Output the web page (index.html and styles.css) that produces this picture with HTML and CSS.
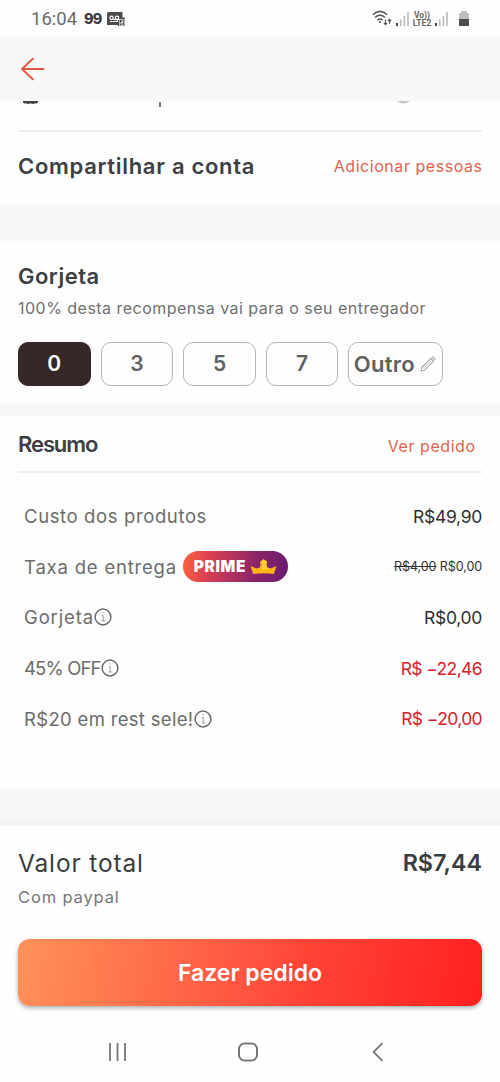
FILE: index.html
```html
<!DOCTYPE html>
<html lang="pt-BR">
<head>
<meta charset="utf-8">
<title>Resumo do pedido</title>
<link rel="stylesheet" href="styles.css">
</head>
<body>
<div class="screen">
  <div class="status">
    <div class="status-left">
      <span class="clock">16:04</span>
      <span class="app99">99</span>
      <svg class="voicemail" width="18" height="14" viewBox="0 0 18 14"><path d="M1.500 0H15.500V5.500H18V14H11V13H0V1.500Q0 0 1.500 0Z" fill="#4d4d4d"/><g fill="none" stroke="#fff" stroke-width="1.100"><circle cx="4.500" cy="5.800" r="1.700"/><circle cx="10" cy="5.800" r="1.700"/><path d="M4.500 7.500H10M3 9.500H10.500V7.500H12.500"/></g><rect x="12.500" y="7.500" width="5" height="6" fill="#4d4d4d" stroke="#fff" stroke-width=".6"/><path d="M14 9h2v1.500h-2V12h2" fill="none" stroke="#fff" stroke-width=".8"/></svg>
    </div>
    <div class="status-right">
      <svg class="wifi" width="20" height="17" viewBox="0 0 20 17" fill="none" stroke="#555"><path d="M.8 4.800Q8 -2 15.200 4.800M3 7.500Q8 3 13 7.500M5.300 10.200Q8 7.800 10.700 10.200" stroke-width="1.500"/><circle cx="8" cy="12" r="1.100" fill="#555" stroke="none"/><path d="M13.500 9.500V14.500M11.800 12.800L13.500 14.600L15.200 12.800M17.500 14V9.500M15.900 11.200L17.500 9.400L19.100 11.200" stroke-width="1.100"/></svg>
      <svg class="signal" width="14" height="15" viewBox="0 0 14 15"><path d="M0 12h2v3H0z" fill="#444"/><path d="M4 8.500h1.600V15H4zM7.600 5h1.600v10H7.600zM11.200 1h1.600v14h-1.600z" fill="#bbb"/></svg>
      <span class="volte"><span>Vo))</span><span>LTE2</span></span>
      <svg class="signal" width="14" height="15" viewBox="0 0 14 15"><path d="M0 12h2v3H0z" fill="#444"/><path d="M4 8.500h1.600V15H4zM7.600 5h1.600v10H7.600zM11.200 1h1.600v14h-1.600z" fill="#bbb"/></svg>
      <svg class="battery" width="10" height="15" viewBox="0 0 10 15"><path d="M0 15V3.500Q0 2 1.500 2H2.500V0H7.500V2H8.500Q10 2 10 3.500V15Z" fill="#bdbdbd"/><path d="M0 8H10V14Q10 15 9 15H1Q0 15 0 14Z" fill="#4d4d4d"/></svg>
    </div>
  </div>

  <div class="header">
    <svg width="24" height="24" viewBox="0 0 24 24" fill="none" stroke="#e3583f" stroke-width="1.900" stroke-linecap="round" stroke-linejoin="round"><path d="M22.500 12H1M11.800 1.700L1 12L11.800 22.300"/></svg>
  </div>

  <div class="share">
    <svg class="scrolled" width="464" height="8" viewBox="0 0 464 8"><path d="M5 0H20V1.500Q18.500 3.200 17 2.200Q15 3.500 12.500 2.300Q10 3.500 8 2.200Q6.500 3 5 1.500Z" fill="#424242"/><path d="M141 1h2v5h-2z" fill="#777"/><path d="M379 0H392Q389 2.600 385.500 2.600Q382 2.600 379 0Z" fill="#c8c8c8"/></svg>
    <div class="rule share-rule"></div>
    <div class="share-row">
      <span class="title t-share">Compartilhar a conta</span>
      <span class="link l-add">Adicionar pessoas</span>
    </div>
  </div>
  <div class="band"></div>

  <div class="tip">
    <div class="title t-tip">Gorjeta</div>
    <div class="tip-note">100% desta recompensa vai para o seu entregador</div>
    <div class="chips">
      <div class="chip chip-on">0</div>
      <div class="chip">3</div>
      <div class="chip">5</div>
      <div class="chip">7</div>
      <div class="chip chip-other"><span>Outro</span><svg width="16" height="16" viewBox="0 0 16 16" fill="none" stroke="#aaa" stroke-width="1.100" stroke-linejoin="round"><path d="M1 15L1.800 11.500L10.800 2.500L13.500 5.200L4.500 14.200Z"/><path d="M11.800 1.500L13 .5L15.500 3L14.500 4.200Z" fill="#ddd" stroke="#ccc"/><path d="M3.500 12.500L11 5" stroke="#ddd"/></svg></div>
    </div>
  </div>
  <div class="band band-thin"></div>

  <div class="summary">
    <div class="summary-head">
      <span class="title t-sum">Resumo</span>
      <span class="link l-see">Ver pedido</span>
    </div>
    <div class="rule"></div>
    <div class="rows">
      <div class="row"><span class="label w1">Custo dos produtos</span><span class="val v1">R$49,90</span></div>
      <div class="row"><span class="label w2">Taxa de entrega</span>
        <span class="prime"><span class="prime-text">PRIME</span><svg width="27" height="16" viewBox="0 0 27 16"><path d="M.5 7L6.500 9.500L9.800 8.500L10.800 5Q9 3.500 10.800 2L13.500 .3L16.200 2Q18 3.500 16.200 5L17.200 8.500L20.500 9.500L26.500 7L23.800 15Q13.500 13.400 3.200 15Z" fill="#fbb316"/><path d="M12 1.500L13.500 .3L16.200 2Q18 3.500 16.200 5L17.200 8.500L20.500 9.500L12 11.500Z" fill="#ffd02b"/></svg></span>
        <span class="val v2"><s>R$4,00</s> R$0,00</span></div>
      <div class="row"><span class="label w3">Gorjeta</span><svg class="info" width="18" height="18" viewBox="0 0 18 18"><circle cx="9" cy="9" r="7.900" fill="none" stroke="#6b6b6b" stroke-width="1.500"/><path d="M8 7.500H9.200V13M7.700 13H10.700M8.500 4.800H9.700" fill="none" stroke="#999" stroke-width="1"/></svg><span class="val v3">R$0,00</span></div>
      <div class="row"><span class="label w4">45% OFF</span><svg class="info" width="18" height="18" viewBox="0 0 18 18"><circle cx="9" cy="9" r="7.900" fill="none" stroke="#6b6b6b" stroke-width="1.500"/><path d="M8 7.500H9.200V13M7.700 13H10.700M8.500 4.800H9.700" fill="none" stroke="#999" stroke-width="1"/></svg><span class="val off v4">R$ −22,46</span></div>
      <div class="row"><span class="label w5">R$20 em rest sele!</span><svg class="info" width="18" height="18" viewBox="0 0 18 18"><circle cx="9" cy="9" r="7.900" fill="none" stroke="#6b6b6b" stroke-width="1.500"/><path d="M8 7.500H9.200V13M7.700 13H10.700M8.500 4.800H9.700" fill="none" stroke="#999" stroke-width="1"/></svg><span class="val off v5">R$ −20,00</span></div>
    </div>
  </div>
  <div class="band band-total"></div>

  <div class="total">
    <div class="total-row"><span class="total-label">Valor total</span><span class="total-value">R$7,44</span></div>
    <div class="pay">Com paypal</div>
    <div class="order"><span>Fazer pedido</span></div>
  </div>

  <div class="nav">
    <svg width="20" height="20" viewBox="0 0 20 20" stroke="#777" stroke-width="1.800"><path d="M2 1V19M9.500 1V19M17 1V19"/></svg>
    <svg width="22" height="20" viewBox="0 0 22 20" fill="none" stroke="#777" stroke-width="2"><rect x="2" y="1.500" width="18" height="17" rx="5.500"/></svg>
    <svg width="12" height="20" viewBox="0 0 12 20" fill="none" stroke="#777" stroke-width="1.800"><path d="M10.500 1.200L1.500 10L10.500 18.800"/></svg>
  </div>
</div>
</body>
</html>
```

FILE: styles.css
```css
* { box-sizing: border-box; }
body { margin: 0; background: #fefefe; font-family: Inter, "Liberation Sans", sans-serif; color: #3a3d40; }
.screen { width: 500px; height: 1082px; display: flex; flex-direction: column; overflow: hidden; white-space: nowrap; }
.status { height: 37px; display: flex; justify-content: space-between; padding: 0 31px; align-items: center; }
.status-left, .status-right { display: flex; align-items: center; }
.clock { font: 400 18.5px/22px Roboto, sans-serif; color: #6a6a6a; width: 53px; }
.app99 { font: 800 14.500px/20px Inter, sans-serif; color: #3e3e3e; width: 23px; letter-spacing: -.8px; }
.wifi { margin-right: 4px; }
.signal { flex: none; }
.volte { display: flex; flex-direction: column; align-items: center; width: 20px; margin: 0 3px 0 2px; font: 700 8.500px/8px Roboto, sans-serif; color: #666; }
.battery { margin-left: 10px; }
.header { height: 64px; background: #f8f8f6; padding: 20px 21px; }
.header svg { display: block; }
.share { height: 103px; padding: 0 18px; }
.scrolled { display: block; margin-bottom: 21px; }
.rule { height: 1.500px; background: #efefef; }
.share-row { height: 70px; display: flex; justify-content: space-between; align-items: center; padding-bottom: 1px; }
.title { font-weight: 600; font-size: 22px; line-height: 26px; color: #3c3f43; }
.t-share { letter-spacing: .7px; }
.t-tip { letter-spacing: .5px; }
.t-sum { letter-spacing: -1.100px; }
.link { font-size: 16px; line-height: 20px; color: #df6450; letter-spacing: .55px; margin-right: -.55px; }
.band { height: 37px; background: #f8f8f6; flex: none; }
.band-thin { height: 13px; }
.band-total { background: linear-gradient(#f8f8f6 82%, #f3f3f2 84%); }
.tip { height: 162px; padding: 22px 18px 0; }
.tip-note { font-size: 16px; line-height: 20px; margin-top: 9px; color: #707070; letter-spacing: .48px; }
.chips { display: flex; gap: 10px; margin-top: 24px; }
.chip { width: 72.600px; height: 44px; border: 1.500px solid #b5b5b5; border-radius: 10px; display: flex; align-items: center; justify-content: center; font-weight: 600; font-size: 21px; color: #616161; padding-bottom: 1px; }
.chip-on { background: #342725; border-color: #342725; color: #fff; }
.chip-other { width: 95px; gap: 5px; font-size: 22px; letter-spacing: .3px; padding-right: 2px; }
.summary { height: 373px; padding: 14px 18px 0; }
.summary-head { display: flex; justify-content: space-between; align-items: center; height: 28px; margin-bottom: 13px; padding-right: 7px; }
.l-see { margin-top: 3px; }
.rows { padding: 18.500px 0 0 6px; }
.row { height: 50.600px; display: flex; align-items: center; }
.label { font-size: 18.500px; color: #6c6c6c; }
.w1 { letter-spacing: .62px; }
.w2 { letter-spacing: .8px; }
.w3 { letter-spacing: .85px; }
.w4 { letter-spacing: -.85px; }
.w5 { letter-spacing: .32px; }
.val { margin-left: auto; font-size: 17.500px; color: #303030; letter-spacing: -.3px; }
.v2 { font-size: 12.500px; letter-spacing: -.08px; }
.off { color: #d8202c; letter-spacing: -.62px; }
.prime { width: 105px; height: 31px; border-radius: 16px; margin-left: 6.500px; display: flex; align-items: center; justify-content: center; gap: 4px; background: linear-gradient(100deg, #fb6440 0%, #e04350 22%, #8a2468 68%, #6a1b70 100%); padding-right: 1px; }
.prime-text { font: 900 15.500px/20px Inter, sans-serif; color: #fff; letter-spacing: .6px; }
.total { height: 195px; padding: 21.500px 18px 0; }
.total-row { display: flex; justify-content: space-between; height: 30px; line-height: 30px; }
.total-label { font-size: 24.500px; letter-spacing: .85px; }
.total-value { font-size: 23.300px; font-weight: 600; }
.pay { margin-top: 9.500px; font-size: 16.500px; line-height: 20px; color: #777; letter-spacing: .85px; }
.order { margin-top: 32px; height: 67px; border-radius: 12px; display: flex; align-items: center; justify-content: center; font-size: 23px; font-weight: 600; color: #fff; background: linear-gradient(100deg, #ff9259, #ff5440 50%, #ff4334 62%, #ff2021); box-shadow: 0 2px 4px rgba(60,80,90,.45); }
.nav { height: 61px; display: grid; grid-template-columns: 129px 135px 12px; padding: 21px 0 0 107.500px; }
```
